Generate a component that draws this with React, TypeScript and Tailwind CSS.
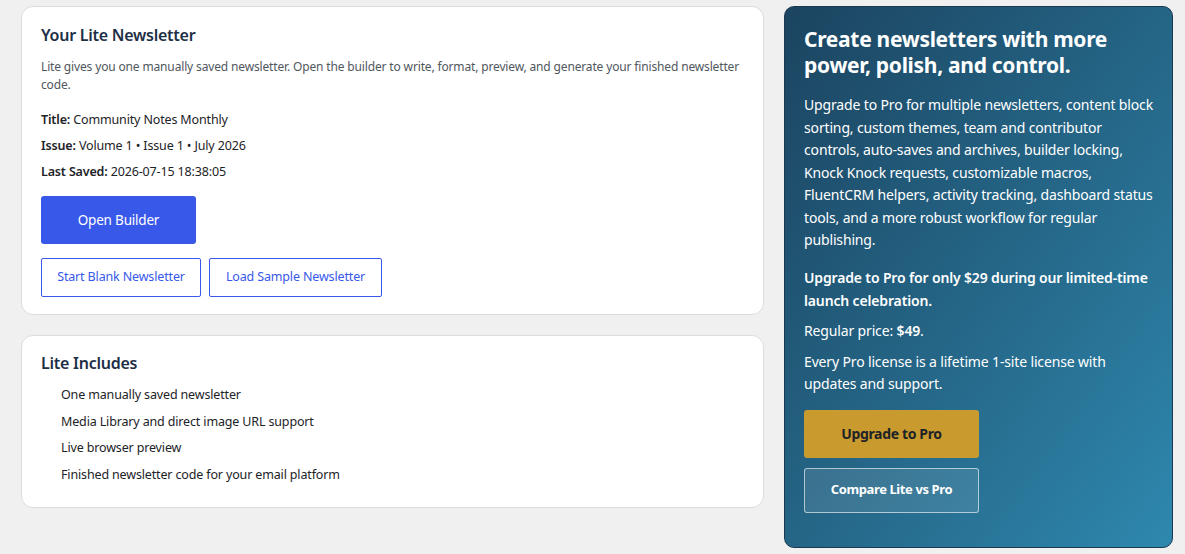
import React from "react";

const font = { fontFamily: '"Noto Sans", "Open Sans", sans-serif' };

export default function App() {
  return (
    <div className="min-h-[554px] w-full bg-[#f0f0f1] pl-[21px] pt-[6px]" style={font}>
      <div className="flex items-start gap-5">
        <div className="flex w-[743px] flex-col gap-5">
          <section className="rounded-xl border border-[#dcdcde] bg-white px-[19px] pb-[17px] pt-4">
            <h2 className="text-[16px] font-semibold leading-[24px] tracking-[-0.25px] text-[#1d2f45]">Your Lite Newsletter</h2>
            <p className="mt-[11px] text-[12px] leading-[17.5px] tracking-[-0.15px] text-[#50575e]">
              Lite gives you one manually saved newsletter. Open the builder to write, format, preview, and generate your finished newsletter code.
            </p>
            <div className="mt-[18px] flex flex-col gap-2 text-[12.5px] leading-[18px] tracking-[-0.15px] text-[#1d2327]">
              <p><span className="font-semibold">Title:</span> Community Notes Monthly</p>
              <p><span className="font-semibold">Issue:</span> Volume 1 • Issue 1 • July 2026</p>
              <p><span className="font-semibold">Last Saved:</span> 2026-07-15 18:38:05</p>
            </div>
            <button className="mt-[15px] flex h-[48px] w-[155px] items-center justify-center rounded-[3px] bg-[#3858e9] text-[13.5px] tracking-[-0.2px] text-white">
              Open Builder
            </button>
            <div className="mt-[14px] flex gap-2">
              <button className="flex h-[39px] w-[160px] items-center justify-center rounded-[2px] border border-[#3858e9] bg-white text-[12.5px] tracking-[-0.15px] text-[#3858e9]">
                Start Blank Newsletter
              </button>
              <button className="flex h-[39px] w-[173px] items-center justify-center rounded-[2px] border border-[#3858e9] bg-white text-[12.5px] tracking-[-0.15px] text-[#3858e9]">
                Load Sample Newsletter
              </button>
            </div>
          </section>
          <section className="rounded-xl border border-[#dcdcde] bg-white px-[19px] pb-[23px] pt-[15px]">
            <h2 className="text-[16px] font-semibold leading-[24px] tracking-[-0.25px] text-[#1d2f45]">Lite Includes</h2>
            <ul className="mt-[11px] flex flex-col gap-[8.5px] pl-5 text-[12.5px] leading-[18px] tracking-[-0.15px] text-[#1d2327]">
              <li>One manually saved newsletter</li>
              <li>Media Library and direct image URL support</li>
              <li>Live browser preview</li>
              <li>Finished newsletter code for your email platform</li>
            </ul>
          </section>
        </div>
        <aside className="w-[389px] rounded-[10px] border border-[#1a3a52] bg-gradient-to-br from-[#1b4460] to-[#2e88ae] px-[19px] pb-[34px] pt-[19px] text-white">
          <h2 className="text-[21px] font-bold leading-[26px] tracking-[-0.3px]">Create newsletters with more power, polish, and control.</h2>
          <p className="mt-4 text-[14px] leading-[22.5px] tracking-[-0.15px]">
            Upgrade to Pro for multiple newsletters, content block sorting, custom themes, team and contributor controls, auto-saves and archives, builder locking, Knock Knock requests, customizable macros, FluentCRM helpers, activity tracking, dashboard status tools, and a more robust workflow for regular publishing.
          </p>
          <p className="mt-[14px] text-[14px] font-semibold leading-[23px] tracking-[-0.15px]">
            Upgrade to Pro for only $29 during our limited-time launch celebration.
          </p>
          <p className="mt-[8px] text-[14px] leading-[22.5px] tracking-[-0.15px]">
            Regular price: <span className="font-semibold">$49</span>.
          </p>
          <p className="mt-[8.5px] text-[14px] leading-[22.5px] tracking-[-0.15px]">
            Every Pro license is a lifetime 1-site license with updates and support.
          </p>
          <button className="mt-[14px] flex h-[48px] w-[175px] items-center justify-center rounded-[3px] bg-[#c99a2e] text-[14px] font-bold tracking-[-0.35px] text-[#1d2327]">
            Upgrade to Pro
          </button>
          <button className="mt-[10px] flex h-[45px] w-[175px] items-center justify-center rounded-[3px] border border-white/60 bg-white/10 text-[13px] font-bold tracking-[-0.4px] text-white">
            Compare Lite vs Pro
          </button>
        </aside>
      </div>
    </div>
  );
}
